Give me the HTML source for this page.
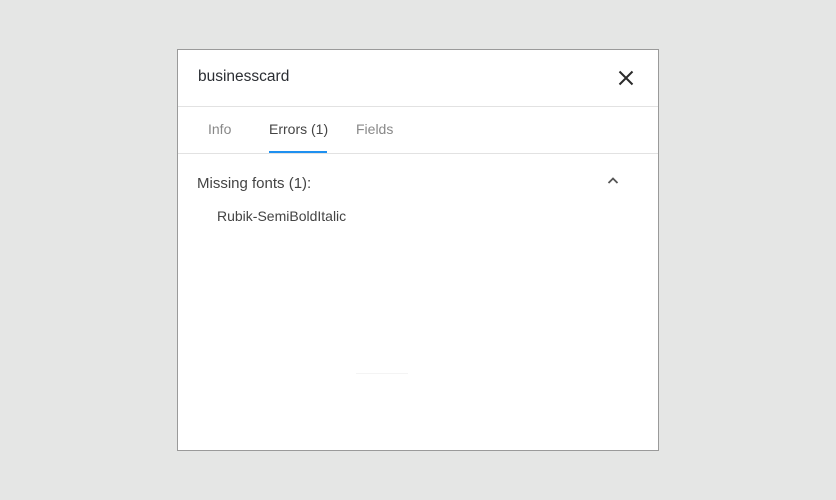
<!DOCTYPE html>
<html><head><style>
body{margin:0;width:836px;height:500px;background:#e5e6e5;font-family:"Liberation Sans",sans-serif;position:relative;overflow:hidden}
.d{position:absolute;left:177px;top:49px;width:480px;height:400px;background:#fff;border:1px solid #9a9a9a}
.t{position:absolute;font-size:15px;color:#2f3133;white-space:nowrap}
.l{position:absolute;left:0;right:0;height:1px;background:#e2e2e2}
</style></head><body>
<div class="d">
<div class="t" style="left:20px;top:18px;font-size:15.5px;color:#2b2e33">businesscard</div>
<svg style="position:absolute;left:440px;top:20px" width="16" height="16" viewBox="0 0 16 16"><path d="M1.5 1.5L14.5 14.5M14.5 1.5L1.5 14.5" stroke="#2a2a2a" stroke-width="2"/></svg>
<div class="l" style="top:56px"></div>
<div class="t" style="left:30px;top:71px;font-size:14px;color:#888">Info</div>
<div class="t" style="left:91px;top:71px;font-size:14px;color:#444">Errors (1)</div>
<div class="t" style="left:178px;top:71px;font-size:14px;color:#888">Fields</div>
<div style="position:absolute;left:91px;top:101px;width:58px;height:2px;background:#1e90f0"></div>
<div class="l" style="top:103px"></div>
<div class="t" style="left:19px;top:125px;color:#444">Missing fonts (1):</div>
<svg style="position:absolute;left:428px;top:126px" width="14" height="10" viewBox="0 0 14 10"><path d="M2.5 7L7 2.5L11.5 7" stroke="#555" stroke-width="1.8" fill="none"/></svg>
<div class="t" style="left:39px;top:158px;font-size:14px;color:#444">Rubik-SemiBoldItalic</div>
<div style="position:absolute;left:178px;top:323px;width:52px;height:1px;background:#f4f4f4"></div>
</div>
</body></html>
